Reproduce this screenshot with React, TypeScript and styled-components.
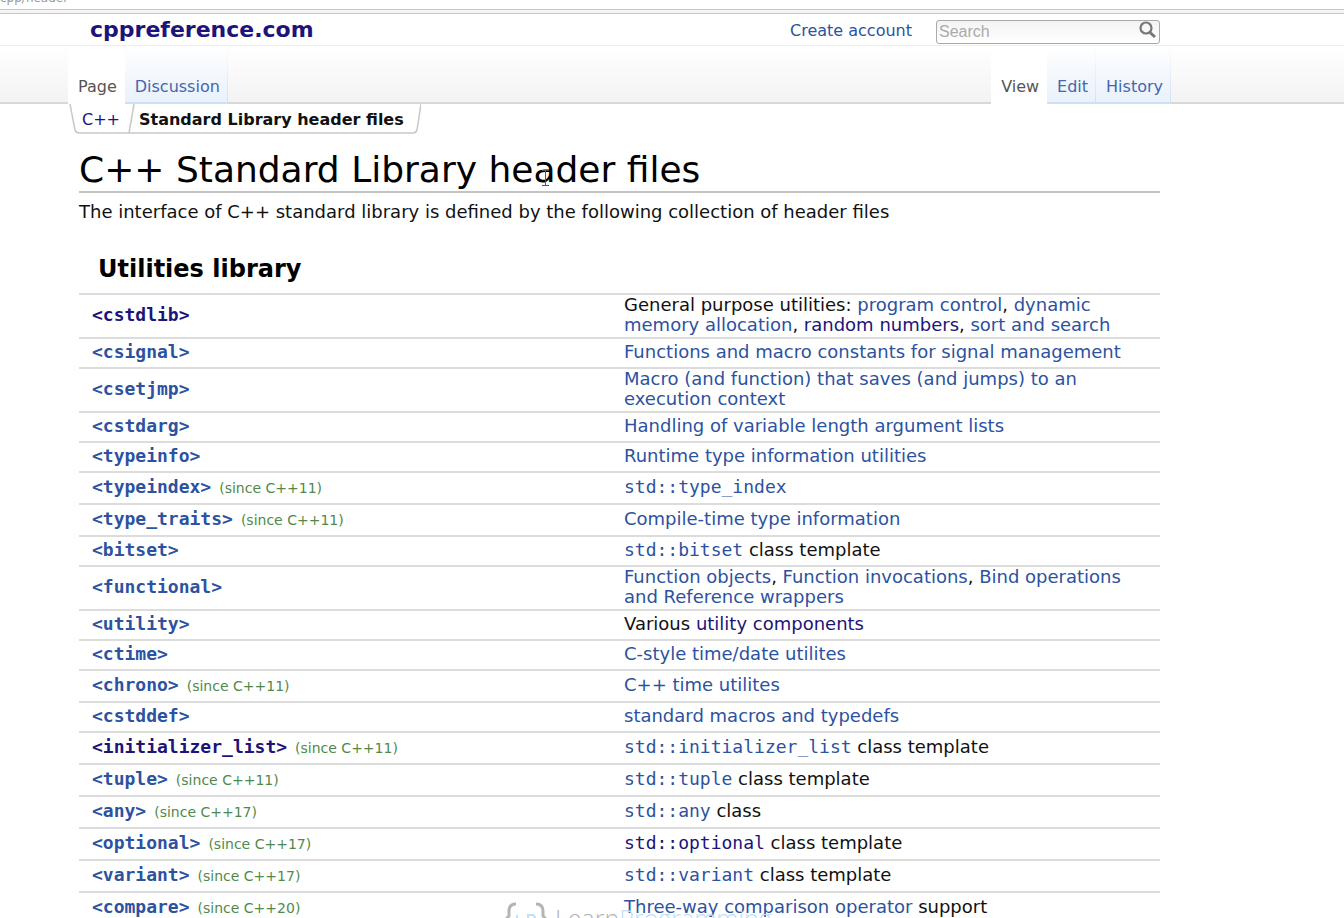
import React from "react";
import styled, { createGlobalStyle } from "styled-components";

const LINK = "#2c52a0";
const VISITED = "#1c1478";

const GlobalStyle = createGlobalStyle`
  * { box-sizing: border-box; }
  html, body, #root { height: 100%; }
  body {
    margin: 0;
    overflow: hidden;
    background: #fff;
    color: #111;
    font-family: "DejaVu Sans", sans-serif;
    font-size: 18px;
    line-height: 20px;
  }
`;

const Page = styled.div`
  position: relative;
  height: 100%;
  overflow: hidden;
`;

const AddressStrip = styled.div`
  display: flex;
  align-items: flex-end;
  height: 14px;
  padding-bottom: 8px;
  overflow: hidden;
  color: #999;
  font-size: 12px;
  line-height: 16px;
  background: linear-gradient(#fff 9px, #c6c6c6 9px, #c6c6c6 10px, #f4f4f4 10px, #f4f4f4 13px, #c6c6c6 13px);
`;

const Header = styled.header`
  display: flex;
  align-items: center;
  height: 32px;
  padding: 0 184px 0 90px;
  border-bottom: 1px solid #eee;
`;

const SiteName = styled.a`
  flex: 1;
  color: ${VISITED};
  font-size: 22px;
  font-weight: bold;
  line-height: 24px;
  text-decoration: none;
`;

const Link = styled.a<{ $visited?: boolean }>`
  color: ${(p) => (p.$visited ? VISITED : LINK)};
  text-decoration: none;
`;

const AccountLink = styled(Link)`
  margin: 2px 24px 0 0;
  font-size: 16px;
`;

const SearchForm = styled.form`
  display: flex;
  align-items: center;
  width: 224px;
  height: 24px;
  margin-top: 4px;
  padding-right: 2px;
  border: 1px solid #aaa;
  border-radius: 3px;
  background: linear-gradient(#f3f3f3, #fff);
`;

const SearchInput = styled.input`
  flex: 1;
  min-width: 0;
  padding: 0 2px;
  border: 0;
  outline: 0;
  background: transparent;
  font-family: "Liberation Sans", sans-serif;
  font-size: 16px;
  &::placeholder { color: #aaa; opacity: 1; }
`;

const SearchButton = styled.button`
  display: flex;
  padding: 0 0 3px;
  border: 0;
  background: none;
`;

const TabBar = styled.nav`
  display: flex;
  justify-content: space-between;
  height: 58px;
  padding: 0 173px 0 68px;
  border-bottom: 2px solid #d8d8da;
  background: linear-gradient(#fff, #f3f3f5);
`;

const TabGroup = styled.div`
  display: flex;
`;

const Tab = styled.a<{ $active?: boolean }>`
  display: flex;
  align-items: flex-end;
  height: 58px;
  padding: 0 7px 5px 10px;
  border-right: 1px solid;
  border-bottom: 2px solid;
  border-image: linear-gradient(#fff, ${(p) => (p.$active ? "#fff" : "#cfe0f3")}) 1;
  background: ${(p) => (p.$active ? "#fff" : "linear-gradient(#fff, #e9f1fb)")};
  color: ${(p) => (p.$active ? "#555" : "#4565ae")};
  font-size: 16px;
  text-decoration: none;
`;

const Crumbs = styled.nav`
  position: relative;
  display: flex;
  width: max-content;
  height: 30px;
  margin-left: 69px;
  padding: 6px 14px 0 13px;
  font-size: 16px;
`;

const CrumbFrame = styled.svg`
  position: absolute;
  inset: 0;
`;

const CurrentCrumb = styled.strong`
  position: relative;
  margin-left: 19px;
`;

const Main = styled.main`
  margin: 0 184px 0 79px;
`;

const Title = styled.h1`
  margin: 0;
  padding: 16px 0 1px;
  border-bottom: 2px solid #c4c4c4;
  color: #000;
  font-size: 36px;
  font-weight: normal;
  line-height: 40px;
`;

const Intro = styled.p`
  margin: 0;
  padding: 9px 0 0;
`;

const SectionTitle = styled.h2`
  margin: 0;
  padding: 33px 0 10px 19px;
  color: #000;
  font-size: 24px;
  line-height: 28px;
`;

const HeaderTable = styled.table`
  width: 100%;
  table-layout: fixed;
  border-collapse: separate;
  border-spacing: 0;
`;

const Cell = styled.td<{ $tall?: boolean }>`
  height: ${(p) => (p.$tall ? 32 : 30)}px;
  padding: 0 20px 2px 0;
  border-top: 2px solid #dcdcdc;
  vertical-align: middle;
`;

const NameCell = styled(Cell)`
  width: 545px;
  padding-left: 13px;
`;

const Code = styled.code`
  font-family: "DejaVu Sans Mono", monospace;
  font-size: 18px;
  line-height: 20px;
`;

const Mark = styled.span`
  margin-left: 8px;
  color: #4f8a4a;
  font-size: 14px;
`;

const Watermark = styled.div`
  position: absolute;
  top: 901px;
  left: 505px;
  display: flex;
  gap: 8px;
  color: #b4b4b4;
  font-family: "Open Sans", sans-serif;
  font-size: 25px;
  font-weight: 300;
  line-height: 34px;
  pointer-events: none;
`;

const WatermarkAccent = styled.span`
  color: #bfe0f8;
`;

const TextCursor = styled.svg`
  position: absolute;
  top: 170px;
  left: 541px;
`;

type Row = { name: string; since?: string; visited?: boolean; desc: React.ReactNode };

const L = ({ v, children }: { v?: boolean; children: React.ReactNode }) => (
  <Link href="#" $visited={v}>{children}</Link>
);
const C = ({ v, children }: { v?: boolean; children: React.ReactNode }) => (
  <L v={v}><Code>{children}</Code></L>
);

const rows: Row[] = [
  {
    name: "cstdlib",
    visited: true,
    desc: <>General purpose utilities: <L>program control</L>, <L>dynamic memory allocation</L>, <L v>random numbers</L>, <L>sort and search</L></>,
  },
  { name: "csignal", desc: <L>Functions and macro constants for signal management</L> },
  { name: "csetjmp", desc: <L>Macro (and function) that saves (and jumps) to an execution context</L> },
  { name: "cstdarg", desc: <L>Handling of variable length argument lists</L> },
  { name: "typeinfo", desc: <L>Runtime type information utilities</L> },
  { name: "typeindex", since: "C++11", desc: <C>std::type_index</C> },
  { name: "type_traits", since: "C++11", desc: <L>Compile-time type information</L> },
  { name: "bitset", desc: <><C>std::bitset</C> class template</> },
  {
    name: "functional",
    desc: <><L>Function objects</L>, <L>Function invocations</L>, <L>Bind operations</L> <L>and Reference wrappers</L></>,
  },
  { name: "utility", desc: <>Various <L v>utility components</L></> },
  { name: "ctime", desc: <L>C-style time/date utilites</L> },
  { name: "chrono", since: "C++11", desc: <L>C++ time utilites</L> },
  { name: "cstddef", desc: <L>standard macros and typedefs</L> },
  { name: "initializer_list", since: "C++11", visited: true, desc: <><C>std::initializer_list</C> class template</> },
  { name: "tuple", since: "C++11", desc: <><C>std::tuple</C> class template</> },
  { name: "any", since: "C++17", desc: <><C>std::any</C> class</> },
  { name: "optional", since: "C++17", desc: <><C v>std::optional</C> class template</> },
  { name: "variant", since: "C++17", desc: <><C>std::variant</C> class template</> },
  { name: "compare", since: "C++20", desc: <><L>Three-way comparison operator</L> support</> },
];

export default function App() {
  return (
    <Page>
      <GlobalStyle />
      <AddressStrip>cpp/header</AddressStrip>
      <Header>
        <SiteName href="#">cppreference.com</SiteName>
        <AccountLink href="#">Create account</AccountLink>
        <SearchForm>
          <SearchInput type="search" placeholder="Search" aria-label="Search" />
          <SearchButton type="button" aria-label="Go">
            <svg width="18" height="18" viewBox="0 0 18 18" fill="none" stroke="#777">
              <circle cx="7" cy="7" r="5.5" strokeWidth="2.2" />
              <path d="M11 11.5 16 16" strokeWidth="3" />
            </svg>
          </SearchButton>
        </SearchForm>
      </Header>
      <TabBar>
        <TabGroup>
          <Tab href="#" $active>Page</Tab>
          <Tab href="#">Discussion</Tab>
        </TabGroup>
        <TabGroup>
          <Tab href="#" $active>View</Tab>
          <Tab href="#">Edit</Tab>
          <Tab href="#">History</Tab>
        </TabGroup>
      </TabBar>
      <Crumbs>
        <CrumbFrame width="352" height="30" viewBox="0 0 352 30" fill="none" stroke="#c8c8c8" strokeWidth="1.5">
          <path d="M1 0 6 26Q7 29 10 29H344Q347 29 348 26L352 0M65 0 60 29" />
        </CrumbFrame>
        <Link href="#" $visited>C++</Link>
        <CurrentCrumb>Standard Library header files</CurrentCrumb>
      </Crumbs>
      <Main>
        <Title>C++ Standard Library header files</Title>
        <Intro>The interface of C++ standard library is defined by the following collection of header files</Intro>
        <SectionTitle>Utilities library</SectionTitle>
        <HeaderTable>
          <tbody>
            {rows.map((r) => (
              <tr key={r.name}>
                <NameCell $tall={!!r.since}>
                  <Link href="#" $visited={r.visited}>
                    <Code as="b">{`<${r.name}>`}</Code>
                  </Link>
                  {r.since && <Mark>(since {r.since})</Mark>}
                </NameCell>
                <Cell $tall={!!r.since}>{r.desc}</Cell>
              </tr>
            ))}
          </tbody>
        </HeaderTable>
      </Main>
      <TextCursor width="9" height="16" viewBox="0 0 9 16" fill="none" stroke="#555">
        <path d="M1 .5H8M4.500 .5V15.500M1 15.500H8" />
      </TextCursor>
      <Watermark aria-hidden="true">
        <svg width="42" height="36" viewBox="0 0 42 36" fill="none" stroke="#b4b4b4" strokeWidth="3">
          <path d="M11 3Q4 3 4 10V15L1 18 4 21V26Q4 33 11 33M31 3Q38 3 38 10V15L41 18 38 21V26Q38 33 31 33" />
          <path stroke="#bfe0f8" strokeWidth="2" d="M12 14V27H19M23 27V14H27Q30 14 30 18T27 21H23" />
        </svg>
        <span>Learn<WatermarkAccent>Programming</WatermarkAccent></span>
      </Watermark>
    </Page>
  );
}
